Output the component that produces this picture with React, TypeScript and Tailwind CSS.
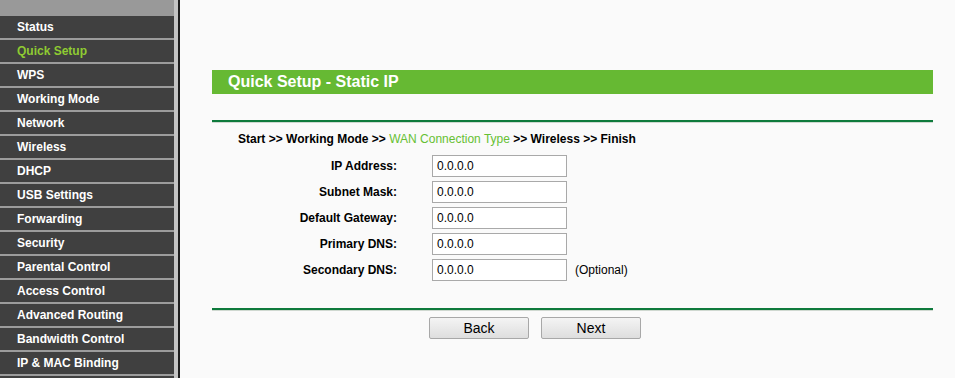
const menu = [
  "Status",
  "Quick Setup",
  "WPS",
  "Working Mode",
  "Network",
  "Wireless",
  "DHCP",
  "USB Settings",
  "Forwarding",
  "Security",
  "Parental Control",
  "Access Control",
  "Advanced Routing",
  "Bandwidth Control",
  "IP & MAC Binding",
];

const fields = [
  { label: "IP Address:", value: "0.0.0.0" },
  { label: "Subnet Mask:", value: "0.0.0.0" },
  { label: "Default Gateway:", value: "0.0.0.0" },
  { label: "Primary DNS:", value: "0.0.0.0" },
  { label: "Secondary DNS:", value: "0.0.0.0", note: "(Optional)" },
];

function Rule() {
  return (
    <div className="w-[721px]">
      <div className="h-[2px] bg-[#0e7a3c]" />
      <div className="h-px bg-[#cfd8d0]" />
    </div>
  );
}

export default function App() {
  return (
    <div className="flex h-[378px] w-[955px] overflow-hidden bg-[#fafafa] font-['Liberation_Sans',Arial,sans-serif] text-[12px] text-black">
      {/* menu */}
      <div className="flex h-full shrink-0">
        <div className="flex w-[174px] flex-col bg-[#404040]">
          <div className="h-4 shrink-0 bg-[#999999]" />
          {menu.map((m) => (
            <div key={m} className="shrink-0">
              <div
                className={`flex h-[22px] items-center pl-[17px] font-bold ${
                  m === "Quick Setup" ? "text-[#8fcb32]" : "text-white"
                }`}
              >
                {m}
              </div>
              <div className="h-[2px] bg-[#9c9c9c]" />
            </div>
          ))}
        </div>
        <div className="w-1 bg-[#c4c4c4]" />
        <div className="w-[2px] bg-[#1e1e1e]" />
      </div>

      {/* content */}
      <div className="flex flex-col pl-8 pt-[70px]">
        <div className="flex h-6 w-[721px] items-center bg-[#66b933] pl-4 text-[16px] font-bold text-white">
          Quick Setup - Static IP
        </div>

        <div className="mt-[26px]">
          <Rule />
        </div>

        <div className="mt-2 h-4 pl-[26px] leading-4 font-bold">
          Start &gt;&gt; Working Mode &gt;&gt;{" "}
          <span className="font-normal text-[#66c033]">WAN Connection Type</span> &gt;&gt; Wireless
          &gt;&gt; Finish
        </div>

        <div className="mt-2 flex flex-col gap-1">
          {fields.map((f) => (
            <div key={f.label} className="flex h-[22px] items-center">
              <div className="w-[185px] text-right font-bold">{f.label}</div>
              <div className="ml-[35px] flex h-[22px] w-[135px] items-center border border-[#a9a9a9] bg-white pl-[4px]">
                {f.value}
              </div>
              {f.note && <div className="ml-2">{f.note}</div>}
            </div>
          ))}
        </div>

        <div className="mt-[27px]">
          <Rule />
        </div>

        <div className="mt-[6px] flex gap-3 pl-[217px]">
          <button className="h-[22px] w-[100px] rounded-[2px] border border-[#a8a8a8] bg-gradient-to-b from-[#f4f4f4] to-[#dedede] text-[14px] leading-none">
            Back
          </button>
          <button className="h-[22px] w-[100px] rounded-[2px] border border-[#a8a8a8] bg-gradient-to-b from-[#f4f4f4] to-[#dedede] text-[14px] leading-none">
            Next
          </button>
        </div>
      </div>
    </div>
  );
}
